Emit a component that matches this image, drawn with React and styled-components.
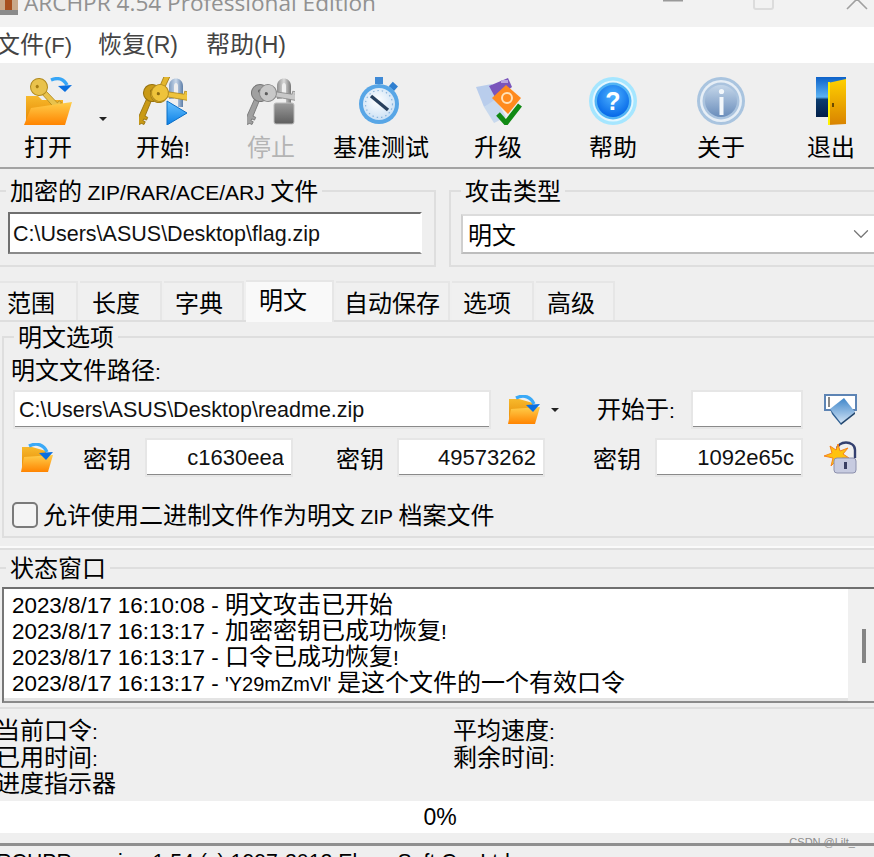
import React from 'react';
import styled, { createGlobalStyle } from 'styled-components';
import { ChevronDown } from 'lucide-react';

const cjk = '"Noto Sans CJK SC", "Liberation Sans", sans-serif';
const latin = '"Liberation Sans", "Noto Sans CJK SC", sans-serif';

const GlobalStyle = createGlobalStyle`
  html, body { margin: 0; padding: 0; background: #efefef; }
  * { box-sizing: border-box; }
`;

const Page = styled.div`
  position: relative;
  width: 874px;
  height: 857px;
  overflow: hidden;
  background: #efefef;
  color: #000;
  font-family: ${cjk};
  font-size: 24px;
  line-height: 28px;
`;

const Lat = styled.span`
  font-family: ${latin};
  font-size: ${(p) => p.$s || 21}px;
`;

const TitleBar = styled.div`
  display: flex;
  height: 27px;
  overflow: hidden;
  background: #f2f2f2;
`;

const TitleText = styled.div`
  flex: none;
  width: 354px;
  margin: -13px 0 0 6px;
  font-family: "Open Sans", sans-serif;
  font-size: 22.6px;
  line-height: 32px;
  color: #919191;
  white-space: nowrap;
`;

const WindowControls = styled.svg`
  margin-left: 285px;
  flex: none;
`;

const MenuBar = styled.div`
  display: flex;
  align-items: center;
  gap: 29px;
  height: 36px;
  margin-left: -4px;
  padding-bottom: 2px;
  background: #fff;
  color: #444;
`;

const MenuItem = styled.div`
  flex: none;
  width: ${(p) => p.$w}px;
  white-space: nowrap;
`;

const Toolbar = styled.div`
  display: flex;
  height: 106px;
  padding-top: 14px;
  border-bottom: 2px solid #a3a3a3;
  background: #efefef;
`;

const ToolItem = styled.div`
  display: flex;
  flex: none;
  flex-direction: column;
  align-items: center;
  width: ${(p) => p.$w}px;
  color: ${(p) => (p.$off ? '#b4b4b4' : '#000')};
  white-space: nowrap;
`;

const ToolLabel = styled.div`
  margin-top: 7px;
`;

const Caret = styled.i`
  display: block;
  flex: none;
  width: 0;
  height: 0;
  border: 4px solid transparent;
  border-top-color: #222;
  border-bottom-width: 0;
`;

const ToolCaret = styled.div`
  flex: none;
  width: 16px;
  padding: 40px 0 0 3px;
`;

const TopGroups = styled.div`
  display: flex;
  gap: 13px;
  margin-left: -2px;
  padding-top: 8px;
`;

const Group = styled.fieldset`
  flex: none;
  width: ${(p) => p.$w}px;
  min-width: 0;
  margin: 0;
  padding: ${(p) => p.$pad};
  border: 2px solid #dedede;
`;

const Legend = styled.legend`
  margin-left: ${(p) => p.$ml || 0}px;
  padding: 0 ${(p) => p.$px ?? 4}px;
  height: 28px;
  line-height: 26px;
  white-space: nowrap;
`;

const TextInput = styled.input`
  display: block;
  width: ${(p) => p.$w}px;
  height: ${(p) => p.$h || 37}px;
  margin: 0 0 0 ${(p) => p.$ml || 0}px;
  padding: 3px ${(p) => (p.$right ? 8 : 5)}px 0 5px;
  flex: none;
  border: 0;
  border-bottom: 2px solid #8a8a8a;
  outline: 2px solid #e6e6e6;
  outline-offset: -1px;
  background: #fff;
  font-family: ${latin};
  font-size: ${(p) => (p.$right ? 22 : 21.5)}px;
  color: #111;
  text-align: ${(p) => (p.$right ? 'right' : 'left')};
`;

const SunkenInput = styled(TextInput)`
  border-top: 2px solid #6f6f6f;
  border-left: 2px solid #6f6f6f;
  border-right: 2px solid #fff;
  padding-left: 3px;
  outline: 0;
`;

const Combo = styled.div`
  display: flex;
  align-items: center;
  justify-content: space-between;
  width: 417px;
  height: 40px;
  margin-top: 2px;
  padding: 0 4px 0 5px;
  border-top: 2px solid #dcdcdc;
  border-left: 2px solid #cfcfcf;
  border-bottom: 2px solid #bdbdbd;
  background: #fff;
`;

const TabStrip = styled.div`
  display: flex;
  align-items: flex-end;
  gap: 2px;
  height: 41px;
  margin-top: 14px;
  border-bottom: 2px solid #dedede;
`;

const Tab = styled.div`
  flex: none;
  width: ${(p) => p.$w}px;
  height: ${(p) => (p.$active ? 42 : 39)}px;
  margin-bottom: ${(p) => (p.$active ? -2 : 0)}px;
  padding: ${(p) => (p.$active ? 3 : 5)}px 0 0 ${(p) => p.$pad}px;
  border: solid #e6e6e6;
  border-width: 2px 2px 0 0;
  background: ${(p) => (p.$active ? '#f9f9f9' : '#f0f0f0')};
  white-space: nowrap;
`;

const OptionsGroup = styled(Group)`
  width: 880px;
  margin: 1px 0 0 2px;
  padding: 5px 0 7px 7px;
`;

const FieldLabel = styled.div`
  height: 28px;
  line-height: 26px;
`;

const FieldRow = styled.div`
  display: flex;
  align-items: center;
  height: 37px;
  margin-top: ${(p) => p.$mt}px;
`;

const Label = styled.div`
  flex: none;
  margin-left: ${(p) => p.$ml}px;
  white-space: nowrap;
`;

const IconSlot = styled.div`
  display: flex;
  flex: none;
  margin-left: ${(p) => p.$ml}px;
`;

const CheckRow = styled.label`
  display: flex;
  align-items: center;
  gap: 5px;
  height: 28px;
  margin: 25px 0 0 1px;
  white-space: nowrap;
`;

const CheckBox = styled.input`
  appearance: none;
  flex: none;
  width: 26px;
  height: 26px;
  margin: 0;
  border: 2px solid #7a7a7a;
  border-radius: 5px;
  background: #f4f4f4;
`;

const Separator = styled.div`
  height: 4px;
  margin-top: 8px;
  border-top: 2px solid #fafafa;
  border-bottom: 2px solid #dedede;
`;

const StatusGroup = styled.fieldset`
  min-width: 0;
  margin: 4px 0 0;
  padding: 5px 0 0;
  border: solid #dedede;
  border-width: 2px 0 0;
`;

const LogBox = styled.div`
  display: flex;
  height: 116px;
  margin-left: 2px;
  border-top: 2px solid #6f6f6f;
  border-left: 2px solid #777;
  border-bottom: 2px solid #8a8a8a;
  background: #fff;
`;

const LogLines = styled.div`
  flex: 1;
  padding: 1px 0 0 8px;
  border-bottom: 3px solid #e4e4e4;
`;

const LogLine = styled.div`
  height: 26px;
  line-height: 26px;
  white-space: nowrap;
`;

const ScrollBar = styled.div`
  flex: none;
  width: 26px;
  padding: 40px 0 0 14px;
  background: #f0f0f0;
`;

const ScrollThumb = styled.div`
  width: 4px;
  height: 34px;
  background: #858585;
`;

const StatusGrid = styled.div`
  display: grid;
  grid-template-columns: 457px 1fr;
  grid-auto-rows: 26.5px;
  margin: 4px 0 0 -4px;
  padding-top: 2px;
`;

const StatusLine = styled.div`
  height: 2px;
  margin-top: 4px;
  background: #dedede;
`;

const Progress = styled.div`
  display: flex;
  align-items: center;
  justify-content: center;
  height: 32px;
  margin-top: 6px;
  padding-left: 6px;
  background: #fff;
`;

const StatusBar = styled.div`
  margin-top: 10px;
  padding-top: 4px;
  border-top: 3px solid #8f8f8f;
  font-family: ${latin};
  font-size: 21.3px;
  line-height: 24px;
  text-indent: -18px;
  white-space: nowrap;
`;

const Watermark = styled.div`
  position: absolute;
  right: 16px;
  top: 835px;
  font-family: ${latin};
  font-size: 11px;
  line-height: 14px;
  color: #8d8d8d;
`;

const Key = ({ x, y, r = 0, head, dark, hole }) => (
  <g transform={`translate(${x} ${y}) rotate(${r})`}>
    <path d="M-2.5 6 L2.5 6 L3 24 L6 24 L6 27 L3 27 L3 29 L5.5 29 L5.5 32 L3 32 L0 35 L-2.5 32 Z" fill={head} stroke={dark} strokeWidth="0.8" />
    <circle cx="0" cy="0" r="8.5" fill={head} stroke={dark} strokeWidth="1" />
    <circle cx="-1" cy="-1.5" r="1.6" fill={hole} />
  </g>
);

const Defs = () => (
  <svg width="0" height="0" style={{ position: 'absolute' }}>
    <defs>
      <linearGradient id="folderFront" x1="0" y1="0" x2="0" y2="1">
        <stop offset="0" stopColor="#ffce4a" />
        <stop offset="1" stopColor="#ff8400" />
      </linearGradient>
      <linearGradient id="folderBack" x1="0" y1="0" x2="0" y2="1">
        <stop offset="0" stopColor="#f7b92c" />
        <stop offset="1" stopColor="#e58400" />
      </linearGradient>
      <linearGradient id="shackle" x1="0" y1="0" x2="1" y2="0">
        <stop offset="0" stopColor="#7e9cc0" />
        <stop offset="0.5" stopColor="#c9d8ea" />
        <stop offset="1" stopColor="#5d7ea8" />
      </linearGradient>
      <linearGradient id="grayShackle" x1="0" y1="0" x2="1" y2="0">
        <stop offset="0" stopColor="#8f8f8f" />
        <stop offset="0.5" stopColor="#dadada" />
        <stop offset="1" stopColor="#777" />
      </linearGradient>
      <linearGradient id="playFill" x1="0" y1="0" x2="0" y2="1">
        <stop offset="0" stopColor="#6cc4ff" />
        <stop offset="1" stopColor="#0a7fe6" />
      </linearGradient>
      <linearGradient id="grayLock" x1="0" y1="0" x2="0" y2="1">
        <stop offset="0" stopColor="#9a9a9a" />
        <stop offset="1" stopColor="#5e5e5e" />
      </linearGradient>
      <radialGradient id="watchFace" cx="0.45" cy="0.4" r="0.7">
        <stop offset="0" stopColor="#fff" />
        <stop offset="1" stopColor="#c3dcf3" />
      </radialGradient>
      <radialGradient id="helpFill" cx="0.5" cy="0.35" r="0.7">
        <stop offset="0" stopColor="#4db2ff" />
        <stop offset="1" stopColor="#0062e6" />
      </radialGradient>
      <linearGradient id="infoFill" x1="0" y1="0" x2="0" y2="1">
        <stop offset="0" stopColor="#c5d7ea" />
        <stop offset="1" stopColor="#6a8dbb" />
      </linearGradient>
      <linearGradient id="doorFrame" x1="0" y1="0" x2="0" y2="1">
        <stop offset="0" stopColor="#0d62c9" />
        <stop offset="0.5" stopColor="#5cb3f3" />
        <stop offset="0.56" stopColor="#0b3d70" />
        <stop offset="1" stopColor="#021f49" />
      </linearGradient>
      <linearGradient id="doorLeaf" x1="0" y1="0" x2="0" y2="1">
        <stop offset="0" stopColor="#ffd000" />
        <stop offset="1" stopColor="#d98300" />
      </linearGradient>
      <linearGradient id="cube" x1="0" y1="0" x2="0" y2="1">
        <stop offset="0" stopColor="#3f86c9" />
        <stop offset="1" stopColor="#cfe2f5" />
      </linearGradient>
    </defs>
  </svg>
);

const OpenKeyIcon = () => (
  <svg width="48" height="48" viewBox="0 0 48 48">
    <path d="M2 19 H14 L18 23 H39 V47 H2 Z" fill="url(#folderBack)" />
    <Key x={15} y={10} r={-42} head="#e9c24c" dark="#b18a1e" hole="#a67c12" />
    <path d="M7 31 L48 25 L41 48 L0 48 Z" fill="url(#folderFront)" />
    <path d="M27 3 C34 0 40 2 43 8" fill="none" stroke="#37a6f7" strokeWidth="3.4" />
    <path d="M34 9 L48 8 L41 15 Z" fill="#0a6fe0" />
  </svg>
);

const KeysPlayIcon = () => (
  <svg width="48" height="48" viewBox="0 0 48 48">
    <path d="M30 22 V9 C30 -1 44 -1 44 9 V30 H39 V9 C39 5 35 5 35 9 V22 Z" fill="url(#shackle)" />
    <Key x={13} y={16} r={24} head="#c99a16" dark="#96720f" hole="#8c6a10" />
    <Key x={20} y={17} r={-155} head="#e3b62e" dark="#a67f14" hole="#8c6a10" />
    <Key x={21} y={16} r={-80} head="#eec33b" dark="#b18a1e" hole="#8c6a10" />
    <path d="M28 24 L48 36 L28 48 Z" fill="url(#playFill)" stroke="#0a6ec6" strokeWidth="1" />
  </svg>
);

const KeysLockIcon = () => (
  <svg width="48" height="48" viewBox="0 0 48 48">
    <path d="M30 22 V9 C30 -1 44 -1 44 9 V28 H39 V9 C39 5 35 5 35 9 V22 Z" fill="url(#grayShackle)" />
    <Key x={13} y={16} r={24} head="#a0a0a0" dark="#767676" hole="#5c5c5c" />
    <Key x={21} y={16} r={-80} head="#c8c8c8" dark="#8a8a8a" hole="#5c5c5c" />
    <rect x="27" y="26" width="20" height="21" rx="2" fill="url(#grayLock)" stroke="#bdbdbd" strokeWidth="1" />
  </svg>
);

const StopwatchIcon = () => (
  <svg width="48" height="48" viewBox="0 0 48 48">
    <rect x="18" y="0" width="8" height="7" fill="#3f8ad6" />
    <rect x="33" y="6" width="7" height="6" transform="rotate(42 36 9)" fill="#2f7fd0" />
    <circle cx="22" cy="27" r="20" fill="#58a6e6" />
    <circle cx="22" cy="27" r="16" fill="url(#watchFace)" />
    <circle cx="22" cy="27" r="13.5" fill="none" stroke="#8ab4dc" strokeWidth="1.2" strokeDasharray="1.4 3" />
    <path d="M14 19 L31 33" stroke="#27405e" strokeWidth="3.4" />
  </svg>
);

const UpgradeIcon = () => (
  <svg width="48" height="48" viewBox="0 0 48 48">
    <path d="M2 10 L18 7 L24 24 L10 30 Z" fill="#b9cdec" />
    <path d="M15 9 L34 1 L38 10 L22 22 Z" fill="#7a55bb" />
    <rect x="27" y="3" width="7" height="3" fill="#b9a5e0" />
    <path d="M10 30 L22 22 L32 40 L20 46 Z" fill="#c8d9ee" />
    <path d="M18 21 L32 8 L47 21 L34 37 Z" fill="#ff8a1e" />
    <circle cx="33" cy="21" r="5" fill="none" stroke="#ffe1b8" strokeWidth="2" />
    <path d="M24 37 L32 46 L46 28" fill="none" stroke="#118a14" strokeWidth="5" />
  </svg>
);

const HelpIcon = () => (
  <svg width="48" height="48" viewBox="0 0 48 48">
    <circle cx="24" cy="24" r="24" fill="#a5e6ff" />
    <circle cx="24" cy="24" r="20.5" fill="#e3f7ff" />
    <circle cx="24" cy="24" r="18.5" fill="#52b4f4" />
    <circle cx="24" cy="24" r="16" fill="url(#helpFill)" />
    <text x="24" y="33" textAnchor="middle" fontFamily="Liberation Sans" fontWeight="700" fontSize="25" fill="#fff">?</text>
  </svg>
);

const InfoIcon = () => (
  <svg width="48" height="48" viewBox="0 0 48 48">
    <circle cx="24" cy="24" r="24" fill="#a9c4df" />
    <circle cx="24" cy="24" r="21" fill="#e6eef6" />
    <circle cx="24" cy="24" r="18.5" fill="#aac3de" />
    <circle cx="24" cy="24" r="16" fill="url(#infoFill)" />
    <rect x="22.5" y="20" width="4" height="18" fill="#f3f7fb" />
    <circle cx="24.5" cy="14.5" r="2.6" fill="#f3f7fb" />
  </svg>
);

const ExitIcon = () => (
  <svg width="48" height="48" viewBox="0 0 48 48">
    <rect x="9" y="0" width="30" height="40" fill="url(#doorFrame)" />
    <path d="M21 6 L39 2 V47 L21 48 Z" fill="url(#doorLeaf)" />
    <rect x="21" y="5" width="2" height="43" fill="#fff200" />
    <rect x="25" y="26" width="2" height="4" fill="#6a4a00" />
  </svg>
);

const SmallFolderIcon = () => (
  <svg width="33" height="30" viewBox="0 0 33 30">
    <path d="M2 4 H12 L26 8 V28 H2 Z" fill="url(#folderBack)" />
    <path d="M4 14 L33 12 L28 29 L1 29 Z" fill="url(#folderFront)" />
    <path d="M9 3 C17 -1 24 2 27 9" fill="none" stroke="#3aa9f7" strokeWidth="3.2" />
    <path d="M19 10 L33 9 L26 17 Z" fill="#0a6fe0" />
  </svg>
);

const CubeIcon = () => (
  <svg width="33" height="32" viewBox="0 0 33 32">
    <rect x="1" y="1" width="31" height="15" fill="#fff" stroke="#5d84b4" strokeWidth="2" />
    <rect x="4" y="3" width="2" height="10" fill="#888" />
    <path d="M6 15 L20 4 L31 18 L17 29 Z" fill="url(#cube)" />
    <path d="M17 29 L17 31 L31 20 L31 18 Z" fill="#20456e" />
    <path d="M6 15 L17 29 L17 31 L8 20 Z" fill="#2b5d92" />
  </svg>
);

const LockStarIcon = () => (
  <svg width="33" height="34" viewBox="0 0 33 34">
    <path d="M13 15 V9 C13 -1 31 -1 31 9 V17" fill="none" stroke="#34406f" strokeWidth="2.4" />
    <path d="M14 3 L16 10 L24 7 L19 13 L25 17 L18 17 L18 25 L13 19 L7 25 L9 17 L0 15 L8 12 L6 5 L12 9 Z" fill="#ffc20e" stroke="#f58220" strokeWidth="1" />
    <rect x="10" y="17" width="22" height="15" rx="3" fill="#c7cbe0" stroke="#8c90ad" strokeWidth="1" />
    <rect x="20" y="21" width="3" height="7" fill="#3a3f63" />
  </svg>
);

const tools = [
  { label: '打开', w: 96, icon: OpenKeyIcon },
  { caret: true },
  { label: '开始', mark: '!', w: 102, icon: KeysPlayIcon },
  { label: '停止', w: 114, icon: KeysLockIcon, off: true },
  { label: '基准测试', w: 106, icon: StopwatchIcon },
  { label: '升级', w: 128, icon: UpgradeIcon },
  { label: '帮助', w: 102, icon: HelpIcon },
  { label: '关于', w: 114, icon: InfoIcon },
  { label: '退出', w: 106, icon: ExitIcon },
];

const tabs = [
  { label: '范围', w: 78, pad: 7 },
  { label: '长度', w: 82, pad: 12 },
  { label: '字典', w: 80, pad: 11 },
  { label: '明文', w: 88, pad: 13, active: true },
  { label: '自动保存', w: 114, pad: 8 },
  { label: '选项', w: 82, pad: 11 },
  { label: '高级', w: 79, pad: 11 },
];

const stamp = '2023/8/17 16:13:17 - ';

export default function App() {
  return (
    <Page>
      <GlobalStyle />
      <Defs />
      <TitleBar>
        <svg width="18" height="18" viewBox="0 0 18 18" style={{ flex: 'none' }}>
          <rect width="18" height="15" fill="#c9a98a" />
          <rect x="5" y="0" width="7" height="11" fill="#a8501e" />
          <rect x="0" y="10" width="18" height="5" fill="#8b8b8b" />
        </svg>
        <TitleText>ARCHPR 4.54 Professional Edition</TitleText>
        <WindowControls width="210" height="27" viewBox="0 0 210 27">
          <rect x="0" y="0" width="20" height="1.5" fill="#9a9a9a" />
          <rect x="91" y="-10" width="19" height="19" rx="2" fill="none" stroke="#dcdcdc" strokeWidth="2" />
          <path d="M184 9 L194 -1 L204 9" fill="none" stroke="#a0a0a0" strokeWidth="1.6" />
        </WindowControls>
      </TitleBar>

      <MenuBar>
        <MenuItem $w={73}>文件<Lat $s={22}>(F)</Lat></MenuItem>
        <MenuItem $w={79}>恢复<Lat $s={23}>(R)</Lat></MenuItem>
        <MenuItem $w={81}>帮助<Lat $s={23}>(H)</Lat></MenuItem>
      </MenuBar>

      <Toolbar>
        {tools.map((tool, index) =>
          tool.caret ? (
            <ToolCaret key={index}><Caret /></ToolCaret>
          ) : (
            <ToolItem key={index} $w={tool.w} $off={tool.off}>
              <tool.icon />
              <ToolLabel>{tool.label}{tool.mark && <Lat>{tool.mark}</Lat>}</ToolLabel>
            </ToolItem>
          )
        )}
      </Toolbar>

      <TopGroups>
        <Group $w={438} $pad="7px 13px 11px 8px">
          <Legend $ml={-2}>加密的 <Lat>ZIP/RAR/ACE/ARJ</Lat> 文件</Legend>
          <SunkenInput readOnly $w={414} $h={42} value="C:\Users\ASUS\Desktop\flag.zip" />
        </Group>
        <Group $w={440} $pad="7px 0 11px 10px">
          <Legend>攻击类型</Legend>
          <Combo>
            明文
            <ChevronDown size={26} color="#777" strokeWidth={1.2} />
          </Combo>
        </Group>
      </TopGroups>

      <TabStrip>
        {tabs.map((tab) => (
          <Tab key={tab.label} $w={tab.w} $pad={tab.pad} $active={tab.active}>{tab.label}</Tab>
        ))}
      </TabStrip>

      <OptionsGroup>
        <Legend $ml={3} $px={4}>明文选项</Legend>
        <FieldLabel>明文文件路径<Lat>:</Lat></FieldLabel>
        <FieldRow $mt={7}>
          <TextInput readOnly $ml={3} $w={476} value="C:\Users\ASUS\Desktop\readme.zip" />
          <IconSlot $ml={17}><SmallFolderIcon /></IconSlot>
          <IconSlot $ml={11}><Caret /></IconSlot>
          <Label $ml={38}>开始于<Lat>:</Lat></Label>
          <TextInput readOnly $ml={17} $w={110} value="" />
          <IconSlot $ml={22}><CubeIcon /></IconSlot>
        </FieldRow>
        <FieldRow $mt={11}>
          <IconSlot $ml={9}><SmallFolderIcon /></IconSlot>
          <Label $ml={30}>密钥</Label>
          <TextInput readOnly $ml={15} $w={146} $right value="c1630eea" />
          <Label $ml={44}>密钥</Label>
          <TextInput readOnly $ml={14} $w={146} $right value="49573262" />
          <Label $ml={49}>密钥</Label>
          <TextInput readOnly $ml={15} $w={146} $right value="1092e65c" />
          <IconSlot $ml={22}><LockStarIcon /></IconSlot>
        </FieldRow>
        <CheckRow>
          <CheckBox type="checkbox" readOnly />
          <span>允许使用二进制文件作为明文 <Lat>ZIP</Lat> 档案文件</span>
        </CheckRow>
      </OptionsGroup>

      <Separator />

      <StatusGroup>
        <Legend $ml={6}>状态窗口</Legend>
        <LogBox>
          <LogLines>
            <LogLine><Lat $s={22.4}>2023/8/17 16:10:08 - </Lat>明文攻击已开始</LogLine>
            <LogLine><Lat $s={22.4}>{stamp}</Lat>加密密钥已成功恢复<Lat>!</Lat></LogLine>
            <LogLine><Lat $s={22.4}>{stamp}</Lat>口令已成功恢复<Lat>!</Lat></LogLine>
            <LogLine><Lat $s={22.4}>{stamp}</Lat><Lat $s={20}>'Y29mZmVl' </Lat>是这个文件的一个有效口令</LogLine>
          </LogLines>
          <ScrollBar><ScrollThumb /></ScrollBar>
        </LogBox>
      </StatusGroup>

      <StatusLine />

      <StatusGrid>
        <div>当前口令<Lat>:</Lat></div>
        <div>平均速度<Lat>:</Lat></div>
        <div>已用时间<Lat>:</Lat></div>
        <div>剩余时间<Lat>:</Lat></div>
        <div>进度指示器</div>
      </StatusGrid>

      <Progress><Lat $s={23}>0%</Lat></Progress>

      <StatusBar>ARCHPR version 1.54 (c) 1997-2012 ElcomSoft Co. Ltd.</StatusBar>

      <Watermark>CSDN @Lilt_.</Watermark>
    </Page>
  );
}
